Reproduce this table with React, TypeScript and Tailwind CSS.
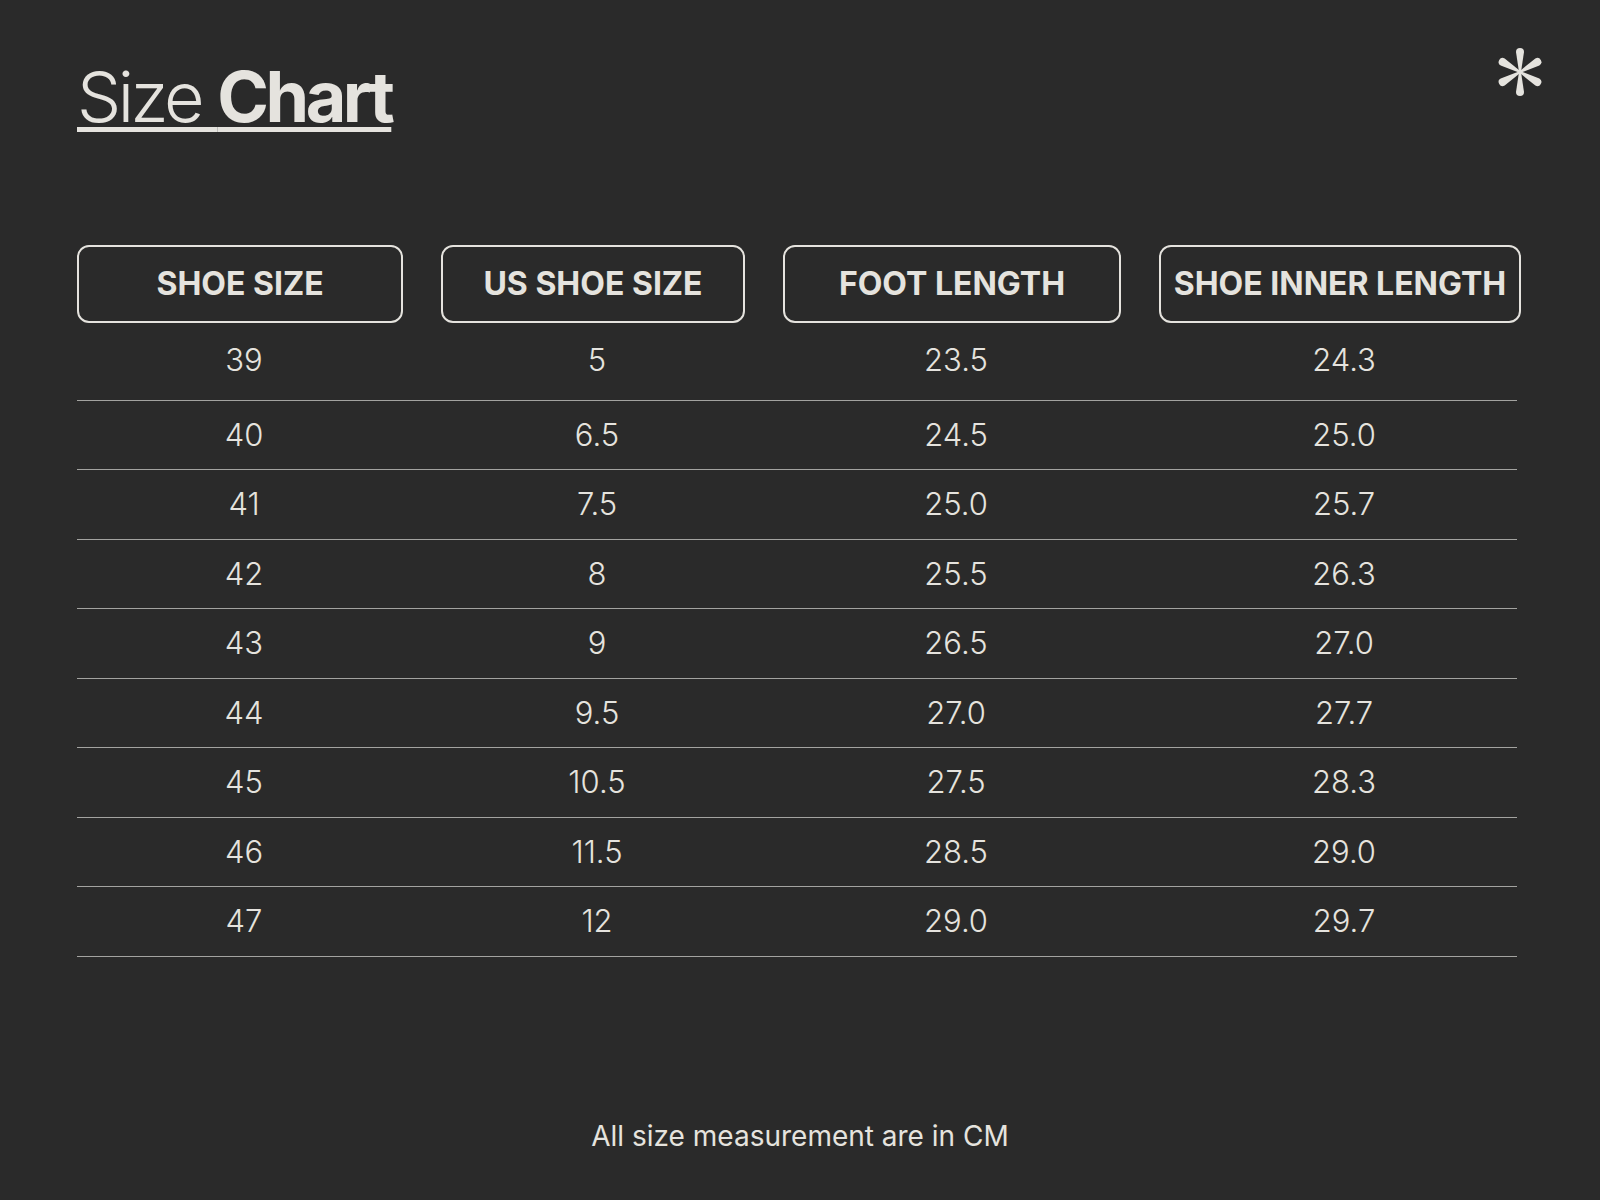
const headers = [
  { label: "SHOE SIZE" },
  { label: "US SHOE SIZE" },
  { label: "FOOT LENGTH" },
  { label: "SHOE INNER LENGTH" },
];

const rows = [
  ["39", "5", "23.5", "24.3"],
  ["40", "6.5", "24.5", "25.0"],
  ["41", "7.5", "25.0", "25.7"],
  ["42", "8", "25.5", "26.3"],
  ["43", "9", "26.5", "27.0"],
  ["44", "9.5", "27.0", "27.7"],
  ["45", "10.5", "27.5", "28.3"],
  ["46", "11.5", "28.5", "29.0"],
  ["47", "12", "29.0", "29.7"],
];

const Asterisk = () => {
  const arm = "M24 25 L21 5 A4 4 0 0 1 29 5 L26 25 Z";
  return (
    <svg width="50" height="50" viewBox="0 0 50 50" className="text-[#e5e3de]">
      {[0, 60, 120, 180, 240, 300].map((deg) => (
        <path key={deg} d={arm} fill="currentColor" transform={`rotate(${deg} 25 25)`} />
      ))}
    </svg>
  );
};

const App = () => {
  return (
    <div
      className="w-full h-[1200px] bg-[#2a2a2a] text-[#e5e3de] flex flex-col"
      style={{ fontFamily: "Inter, 'Noto Sans', sans-serif" }}
    >
      {/* Header */}
      <div className="flex justify-between items-start pl-[77px] pr-[55px]">
        <h1 className="mt-[62px] text-[70px] leading-none tracking-tighter underline decoration-[5px] underline-offset-[5px]">
          <span className="font-light">Size </span>
          <span className="font-bold">Chart</span>
        </h1>
        <div className="mt-[47px]">
          <Asterisk />
        </div>
      </div>

      {/* Table */}
      <div className="ml-[77px] mt-[113px] w-[1446px]">
        <div className="grid grid-cols-[326px_304px_338px_362px] gap-x-[38px] mb-[8px]">
          {headers.map((h) => (
            <div
              key={h.label}
              className="h-[78px] border-2 border-[#e5e3de] rounded-[12px] flex items-center justify-center text-[32px] font-bold"
            >
              {h.label}
            </div>
          ))}
        </div>
        {rows.map((r, idx) => (
          <div
            key={r[0]}
            className="grid grid-cols-[326px_304px_338px_362px] gap-x-[38px] h-[69.5px] border-b border-[#a3a3a0] w-[1440px]"
          >
            {r.map((v, i) => (
              <div
                key={i}
                className={`flex items-center justify-center text-[31px] font-light pl-[8px] ${idx === 0 ? "pb-[10px]" : ""}`}
              >
                {v}
              </div>
            ))}
          </div>
        ))}
      </div>

      {/* Footer */}
      <p className="mt-auto pb-[48px] text-center text-[28px] leading-[32px]">
        All size measurement are in CM
      </p>
    </div>
  );
};

export default App;
